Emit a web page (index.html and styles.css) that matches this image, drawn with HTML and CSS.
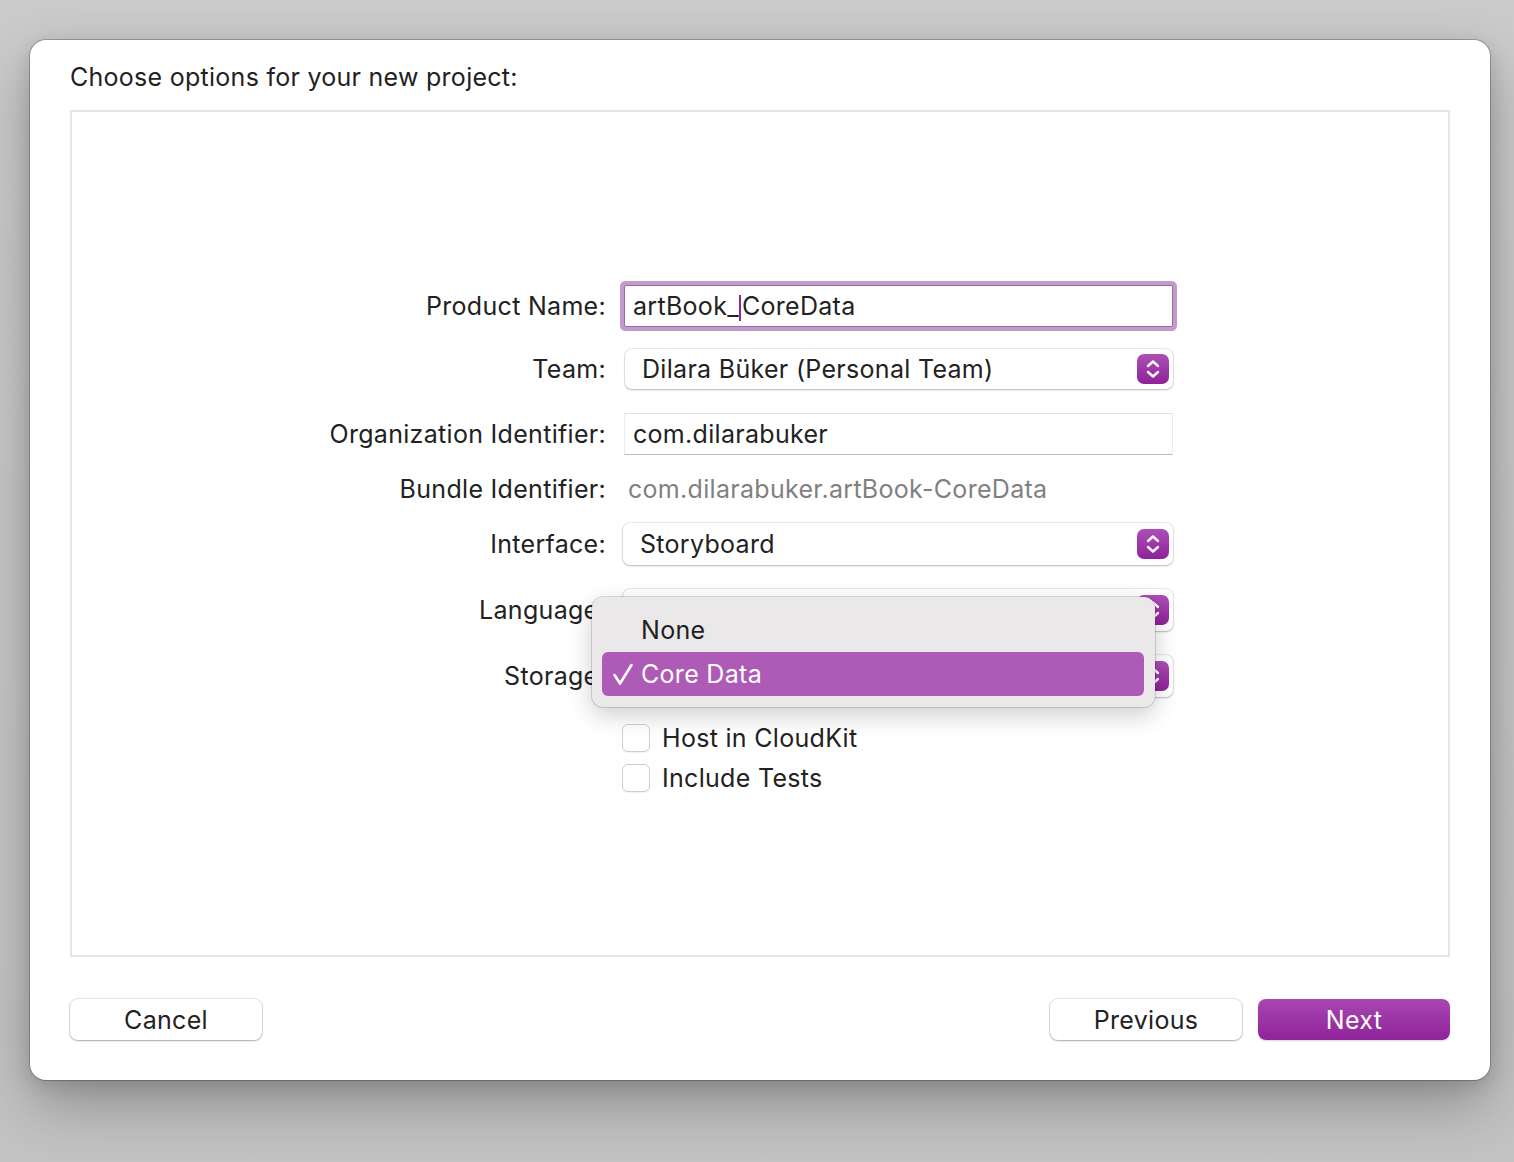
FILE: index.html
```html
<!DOCTYPE html>
<html lang="en">
<head>
<meta charset="utf-8">
<title>Choose options for your new project</title>
<link rel="stylesheet" href="styles.css">
</head>
<body>
<div class="window">
  <div class="title">Choose options for your new project:</div>
  <div class="panel">
    <div class="form">
      <div class="row r-name">
        <div class="label">Product Name:</div>
        <div class="field textfield focused">artBook_<span class="caret"></span>CoreData</div>
      </div>
      <div class="row r-team">
        <div class="label">Team:</div>
        <div class="field popup"><span class="popup-text">Dilara Büker (Personal Team)</span>
          <span class="stepper"><svg width="32" height="30" viewBox="0 0 32 30"><path d="M11 12 L16 7.5 L21 12 M11 18 L16 22.5 L21 18" fill="none" stroke="#fff" stroke-width="2.4" stroke-linecap="round" stroke-linejoin="round"/></svg></span>
        </div>
      </div>
      <div class="row r-org">
        <div class="label">Organization Identifier:</div>
        <div class="field textfield plain">com.dilarabuker</div>
      </div>
      <div class="row r-bundle">
        <div class="label">Bundle Identifier:</div>
        <div class="field static">com.dilarabuker.artBook-CoreData</div>
      </div>
      <div class="row r-iface">
        <div class="label">Interface:</div>
        <div class="field popup"><span class="popup-text">Storyboard</span>
          <span class="stepper"><svg width="32" height="30" viewBox="0 0 32 30"><path d="M11 12 L16 7.5 L21 12 M11 18 L16 22.5 L21 18" fill="none" stroke="#fff" stroke-width="2.4" stroke-linecap="round" stroke-linejoin="round"/></svg></span>
        </div>
      </div>
      <div class="row r-lang">
        <div class="label">Language:</div>
        <div class="field popup"><span class="popup-text"></span>
          <span class="stepper"><svg width="32" height="30" viewBox="0 0 32 30"><path d="M11 12 L16 7.5 L21 12 M11 18 L16 22.5 L21 18" fill="none" stroke="#fff" stroke-width="2.4" stroke-linecap="round" stroke-linejoin="round"/></svg></span>
        </div>
      </div>
      <div class="row r-store">
        <div class="label">Storage:</div>
        <div class="field popup"><span class="popup-text"></span>
          <span class="stepper"><svg width="32" height="30" viewBox="0 0 32 30"><path d="M11 12 L16 7.5 L21 12 M11 18 L16 22.5 L21 18" fill="none" stroke="#fff" stroke-width="2.4" stroke-linecap="round" stroke-linejoin="round"/></svg></span>
        </div>
      </div>
      <div class="row r-cb1">
        <div class="label"></div>
        <div class="field check"><span class="box"></span>Host in CloudKit</div>
      </div>
      <div class="row r-cb2">
        <div class="label"></div>
        <div class="field check"><span class="box"></span>Include Tests</div>
      </div>

      <div class="menu">
        <div class="menu-item"><span class="tick"></span>None</div>
        <div class="menu-item selected"><span class="tick"><svg width="22" height="24" viewBox="0 0 22 24"><path d="M2.5 13 L8 21.5 L19.5 3" fill="none" stroke="#fff" stroke-width="2.6" stroke-linecap="round" stroke-linejoin="round"/></svg></span>Core Data</div>
      </div>
    </div>
  </div>
  <div class="footer">
    <div class="btn">Cancel</div>
    <div class="spacer"></div>
    <div class="btn">Previous</div>
    <div class="btn primary">Next</div>
  </div>
</div>
</body>
</html>
```
FILE: styles.css
```css
* { box-sizing: border-box; }
html, body { margin: 0; padding: 0; }
body {
  width: 1514px;
  height: 1162px;
  overflow: hidden;
  background: linear-gradient(180deg, #cbcbcb 0%, #c6c6c6 60%, #c3c3c3 100%);
  font-family: Inter, "Liberation Sans", sans-serif;
  color: #222;
  padding-top: 40px;
  padding-left: 30px;
}
.window {
  width: 1460px;
  height: 1040px;
  background: #fff;
  border-radius: 16px;
  box-shadow: 0 0 0 1px rgba(0,0,0,0.22), 0 24px 60px rgba(0,0,0,0.28), 0 6px 18px rgba(0,0,0,0.12);
  padding: 0 40px 40px 40px;
  display: flex;
  flex-direction: column;
}
.title {
  margin-top: 22px;
  height: 30px;
  line-height: 30px;
  font-size: 25px;
  letter-spacing: 0.27px;
  margin-bottom: 18px;
}
.panel {
  height: 847px;
  border: 2px solid #e5e5e5;
  padding-top: 169px;
}
.form {
  position: relative;
  display: flex;
  flex-direction: column;
}
.row {
  display: flex;
  align-items: center;
}
.label {
  width: 536px;
  text-align: right;
  font-size: 25px;
  letter-spacing: 0.3px;
  padding-right: 2px;
  margin-right: 16px;
  white-space: nowrap;
}
.field {
  width: 549px;
  font-size: 25px;
  letter-spacing: 0.3px;
  display: flex;
  align-items: center;
  white-space: nowrap;
}
.r-name { height: 50px; }
.r-team { height: 40px; margin-top: 18px; }
.r-org { height: 42px; margin-top: 24px; }
.r-bundle { height: 38px; margin-top: 15px; }
.r-iface { height: 42px; margin-top: 15px; }
.r-lang { height: 42px; margin-top: 24px; }
.r-store { height: 42px; margin-top: 24px; }
.r-cb1 { height: 28px; margin-top: 27px; }
.r-cb2 { height: 28px; margin-top: 12px; }

.textfield {
  height: 100%;
  background: #fff;
  padding-left: 8px;
}
.textfield.focused {
  height: 42px;
  border: 1px solid #9b6aa6;
  box-shadow: 0 0 0 4px #c29acb;
  border-radius: 2px;
}
.textfield.plain {
  border-top: 1px solid #e2e2e2;
  border-left: 1px solid #ececec;
  border-right: 1px solid #ececec;
  border-bottom: 1px solid #bdbdbd;
}
.caret {
  display: inline-block;
  width: 2px;
  height: 26px;
  background: #8a2a98;
  margin: 0 1px 0 0;
  position: relative;
  top: 2px;
}
.static {
  color: #808080;
  padding-left: 4px;
}
.popup {
  height: 40px;
  margin-left: 1px;
  width: 548px;
  background: #fff;
  border-radius: 7px;
  box-shadow: 0 0 0 1px rgba(0,0,0,0.08), 0 1px 2px rgba(0,0,0,0.22);
  padding-left: 17px;
  padding-right: 4px;
  justify-content: space-between;
}
.r-iface .popup, .r-lang .popup, .r-store .popup { margin-left: -1px; width: 550px; height: 42px; }
.stepper {
  width: 32px;
  height: 30px;
  border-radius: 7px;
  background: linear-gradient(180deg, #ad4fb8 0%, #8f2299 100%);
  display: flex;
}
.check { margin-left: -2px; }
.box {
  width: 28px;
  height: 28px;
  border-radius: 6px;
  border: 1px solid #cfcfcf;
  box-shadow: 0 1px 1px rgba(0,0,0,0.06);
  background: #fff;
  margin-right: 12px;
}
.menu {
  position: absolute;
  left: 520px;
  top: 316px;
  width: 563px;
  height: 110px;
  background: #eae8e9;
  border-radius: 11px;
  box-shadow: 0 0 0 1px rgba(0,0,0,0.14), 0 8px 24px rgba(0,0,0,0.2);
  padding: 11px 11px 10px 10px;
}
.menu-item {
  height: 44px;
  display: flex;
  align-items: center;
  font-size: 25px;
  letter-spacing: 0.3px;
  color: #1f1f1f;
  border-radius: 6px;
  padding-left: 10px;
}
.menu-item.selected {
  background: #ad5bb7;
  color: #fff;
}
.tick {
  width: 29px;
  height: 24px;
  display: inline-flex;
  align-items: center;
}
.footer {
  margin-top: 42px;
  height: 41px;
  display: flex;
  align-items: center;
  gap: 16px;
}
.spacer { flex: 1; }
.btn {
  width: 192px;
  height: 41px;
  border-radius: 8px;
  background: #fff;
  box-shadow: 0 0 0 1px rgba(0,0,0,0.1), 0 1px 2px rgba(0,0,0,0.25);
  display: flex;
  align-items: center;
  justify-content: center;
  font-size: 25px;
  letter-spacing: 0.3px;
  color: #222;
}
.btn.primary {
  background: linear-gradient(180deg, #a846b3 0%, #8f2399 100%);
  color: #fff;
  box-shadow: 0 1px 2px rgba(0,0,0,0.18);
}
```
